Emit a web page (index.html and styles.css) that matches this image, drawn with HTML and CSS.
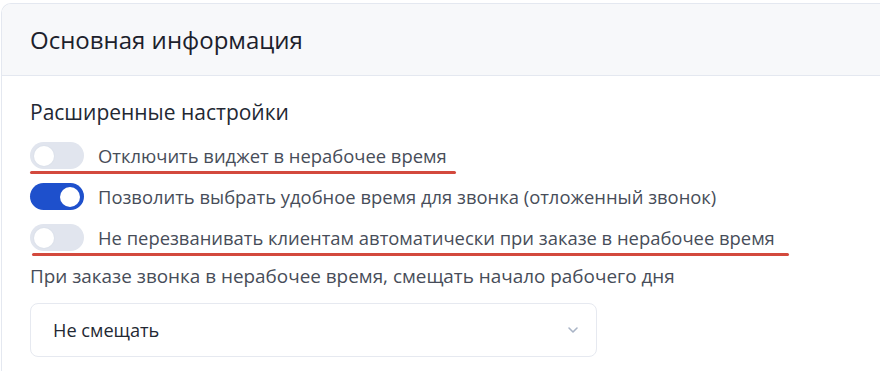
FILE: index.html
```html
<!DOCTYPE html>
<html lang="ru">
<head>
    <meta charset="UTF-8">
    <meta name="viewport" content="width=device-width, initial-scale=1.0">
    <title>Основная информация</title>
    <link rel="stylesheet" href="styles.css">
</head>
<body>
    <div class="card">
        <div class="card-header">
            <h2>Основная информация</h2>
        </div>

        <div class="card-body">
            <h3 class="section-title">Расширенные настройки</h3>

            <div class="option-list">
                <label class="option marked mark-short">
                    <span class="switch"><span class="knob"></span></span>
                    <span class="option-text">Отключить виджет в нерабочее время</span>
                </label>

                <label class="option">
                    <span class="switch on"><span class="knob"></span></span>
                    <span class="option-text">Позволить выбрать удобное время для звонка (отложенный звонок)</span>
                </label>

                <label class="option marked mark-long">
                    <span class="switch"><span class="knob"></span></span>
                    <span class="option-text">Не перезванивать клиентам автоматически при заказе в нерабочее время</span>
                </label>
            </div>

            <div class="field-label">При заказе звонка в нерабочее время, смещать начало рабочего дня</div>

            <div class="select">
                <span class="select-value">Не смещать</span>
                <svg class="chevron" width="12" height="8" viewBox="0 0 12 8">
                    <path d="M2 2 L6 6 L10 2" fill="none" stroke="#a9b4c6" stroke-width="1.6" stroke-linecap="round" stroke-linejoin="round"/>
                </svg>
            </div>
        </div>
    </div>
</body>
</html>
```

FILE: styles.css
```css
html, body {
    height: 100%;
}

body {
    margin: 0;
    background: #ffffff;
    font-family: 'Open Sans', 'Noto Sans', Arial, sans-serif;
    color: #4a505c;
    overflow: hidden;
}

.card {
    margin: 3px 0 0 1px;
    border: 1px solid #e4e8f0;
    border-right: none;
    border-bottom: none;
    border-radius: 10px 0 0 0;
    height: calc(100% - 3px);
    box-sizing: border-box;
    overflow: hidden;
}

.card-header {
    height: 71px;
    background: #f7f8fa;
    border-bottom: 1px solid #e4e8f0;
    display: flex;
    align-items: center;
    padding: 0 28px;
}

.card-header h2 {
    margin: 0;
    font-size: 24px;
    font-weight: 400;
    color: #1c212c;
}

.card-body {
    padding: 24px 28px 0;
}

.section-title {
    margin: 0;
    font-size: 21px;
    line-height: 24px;
    font-weight: 400;
    color: #232833;
}

.option-list {
    margin-top: 18px;
    display: flex;
    flex-direction: column;
    gap: 14px;
}

.option {
    position: relative;
    display: flex;
    align-items: center;
    gap: 14px;
    height: 27px;
}

.switch {
    width: 54px;
    height: 27px;
    border-radius: 14px;
    background: #e1e5ee;
    display: flex;
    align-items: center;
    padding: 0 4px;
    box-sizing: border-box;
    flex-shrink: 0;
}

.switch .knob {
    width: 20px;
    height: 20px;
    border-radius: 50%;
    background: #ffffff;
    box-shadow: 0 0 0 1px #dde2eb;
}

.switch.on {
    background: #1e50cc;
    justify-content: flex-end;
}

.switch.on .knob {
    box-shadow: none;
}

.option-text {
    font-size: 18.4px;
    color: #474d59;
    white-space: nowrap;
}

/* красные пометки поверх строк */
.marked::after {
    content: "";
    position: absolute;
    left: 0;
    bottom: -5px;
    height: 3px;
    border-radius: 2px;
    background: #d3493d;
}

.mark-short::after {
    width: 426px;
}

.mark-long::after {
    left: 2px;
    width: 757px;
}

.field-label {
    margin-top: 13px;
    font-size: 18.9px;
    line-height: 24px;
    color: #474d59;
}

.select {
    margin-top: 15px;
    width: 567px;
    height: 54px;
    box-sizing: border-box;
    border: 1px solid #e6e9f0;
    border-radius: 8px;
    display: flex;
    align-items: center;
    justify-content: space-between;
    padding: 0 17px 0 22px;
}

.select-value {
    font-size: 18.2px;
    color: #232833;
}
```
